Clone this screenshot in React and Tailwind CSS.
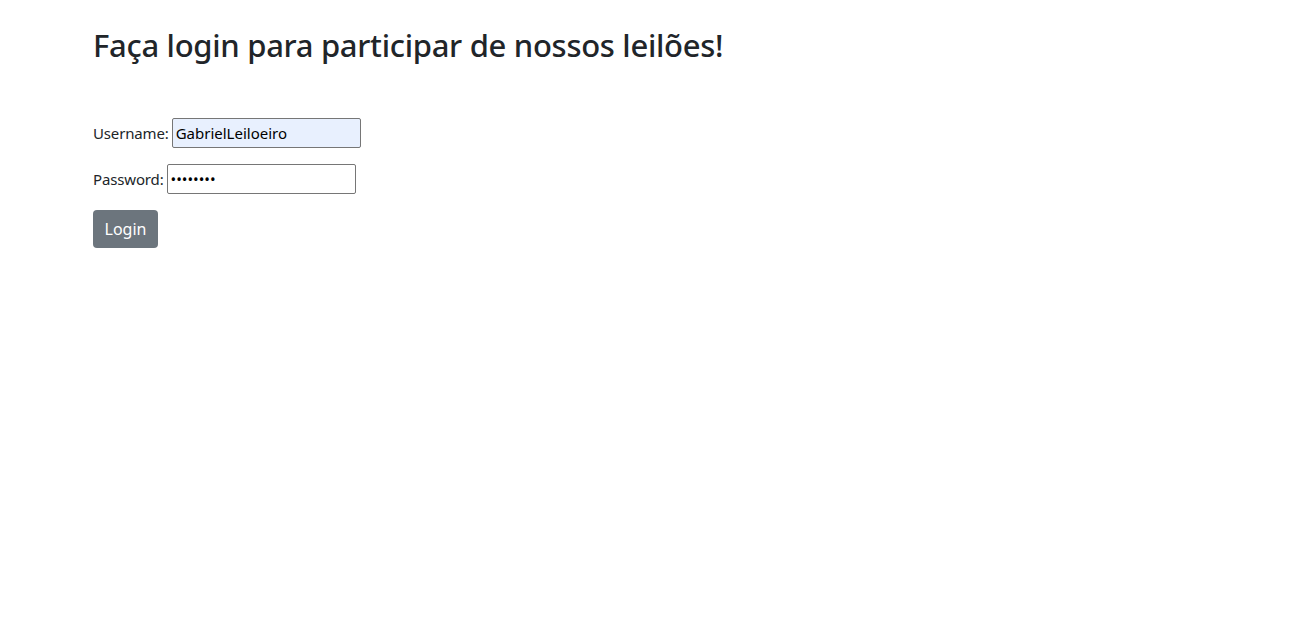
export default function App() {
  return (
    <div className="min-h-screen bg-white text-[#212529]">
      <div className="mx-auto max-w-[1140px] px-[11.5px] pt-[27px] font-['Noto_Sans',sans-serif]">
        <h2 className="text-[31px] tracking-[-0.3px] font-medium leading-[1.2] mb-[54px]">Faça login para participar de nossos leilões!</h2>
        <form className="flex flex-col items-start">
          <div className="flex items-center mb-4">
            <label className="text-[15px] tracking-[-0.15px] mr-[3px]">Username:</label>
            <input
              type="text"
              defaultValue="GabrielLeiloeiro"
              className="w-[189px] h-[30px] border border-[#767676] rounded-[2px] bg-[#e8f0fe] px-[3px] text-[15px] text-black outline-none"
            />
          </div>
          <div className="flex items-center mb-4">
            <label className="text-[15px] tracking-[-0.15px] mr-[3px]">Password:</label>
            <input
              type="password"
              defaultValue="password"
              className="w-[189px] h-[30px] border border-[#767676] rounded-[2px] bg-white px-[3px] text-[15px] text-black outline-none"
            />
          </div>
          <button type="button" className="h-[38px] w-[65px] rounded-[4px] bg-[#6c757d] text-white text-[16px]">Login</button>
        </form>
      </div>
    </div>
  );
}
